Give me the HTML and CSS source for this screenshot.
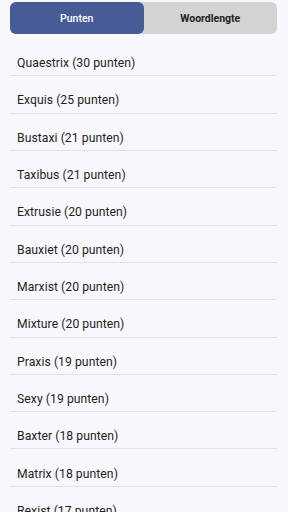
FILE: index.html
```html
<!DOCTYPE html>
<html lang="nl">
<head>
<meta charset="utf-8">
<link rel="stylesheet" href="styles.css">
</head>
<body>
<div class="seg">
  <div class="seg-btn active">Punten</div>
  <div class="seg-btn">Woordlengte</div>
</div>
<ul class="list">
  <li class="row">Quaestrix (30 punten)</li>
  <li class="row">Exquis (25 punten)</li>
  <li class="row">Bustaxi (21 punten)</li>
  <li class="row">Taxibus (21 punten)</li>
  <li class="row">Extrusie (20 punten)</li>
  <li class="row">Bauxiet (20 punten)</li>
  <li class="row">Marxist (20 punten)</li>
  <li class="row">Mixture (20 punten)</li>
  <li class="row">Praxis (19 punten)</li>
  <li class="row">Sexy (19 punten)</li>
  <li class="row">Baxter (18 punten)</li>
  <li class="row">Matrix (18 punten)</li>
  <li class="row">Rexist (17 punten)</li>
  <li class="row">Sextet (17 punten)</li>
</ul>
</body>
</html>
```
FILE: styles.css
```css
html, body {
  margin: 0;
  padding: 0;
  background: #f8f7fc;
  font-family: Roboto, "Noto Sans", sans-serif;
  height: 512px;
  overflow: hidden;
}
.seg {
  display: flex;
  margin: 2px 11px 0 10px;
  height: 32px;
  background: #d3d3d3;
  border-radius: 6px;
}
.seg-btn {
  flex: 1;
  display: flex;
  align-items: center;
  justify-content: center;
  font-size: 10.5px;
  font-weight: 700;
  color: #222222;
  border-radius: 6px;
}
.seg-btn.active {
  background: #475b97;
  color: #ffffff;
  font-weight: 500;
}
.list {
  list-style: none;
  margin: 5px 11px 0 10px;
  padding: 0;
}
.row {
  padding: 14.1px 0 2.23px 7px;
  line-height: 20px;
  font-size: 12.2px;
  letter-spacing: 0.05px;
  color: #1f1f22;
  border-bottom: 1px solid #e2e1e6;
}
```
